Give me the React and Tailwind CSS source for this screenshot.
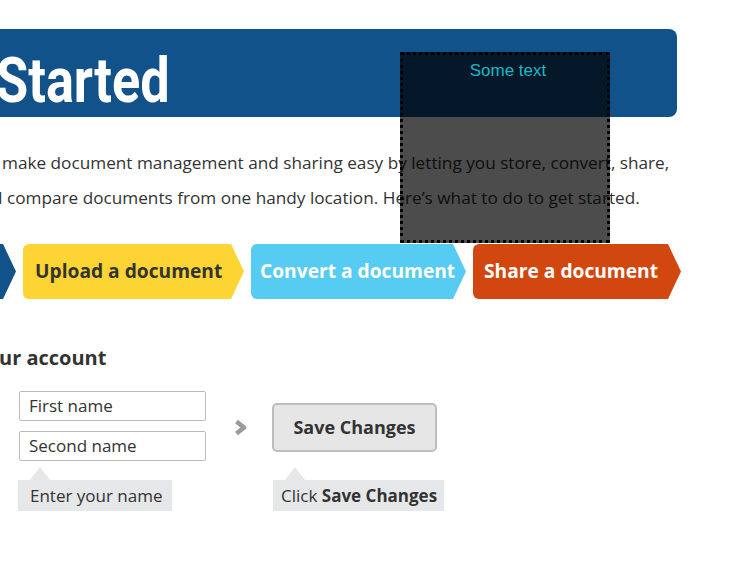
import React from "react";

const body = { fontFamily: '"Open Sans", "Noto Sans", sans-serif' };

function Step({ color, text, w, textColor, pl }) {
  return (
    <div
      className={`h-[55px] shrink-0 rounded-[6px] flex items-center font-bold text-[19.2px] whitespace-nowrap [clip-path:polygon(0_0,calc(100%-13px)_0,100%_50%,calc(100%-13px)_100%,0_100%)] ${color} ${textColor}`}
      style={{ width: w, paddingLeft: pl }}
    >
      {text}
    </div>
  );
}

function Tip({ children, w, pl }) {
  return (
    <div className="flex flex-col">
      <div className="ml-[12px] w-0 h-0 border-l-[10px] border-r-[10px] border-b-[13px] border-l-transparent border-r-transparent border-b-[#e6e7e8]" />
      <div
        className="h-[31px] bg-[#e6e7e8] flex items-center text-[17px] text-[#333] whitespace-nowrap"
        style={{ width: w, paddingLeft: pl }}
      >
        {children}
      </div>
    </div>
  );
}

export default function App() {
  return (
    <div className="relative w-[750px] h-[564px] overflow-hidden bg-white text-[#333]" style={body}>
      <div className="mt-[29px] w-[677px] h-[88px] bg-[#12528a] rounded-r-[8px] flex items-center">
        <span
          className="-ml-[4px] text-white font-bold text-[63px] leading-none pt-[14px] origin-left scale-x-[0.83] inline-block"
          style={{ fontFamily: 'Roboto, "Liberation Sans", sans-serif' }}
        >
          Started
        </span>
      </div>

      <div className="mt-[28px] text-[17.2px] leading-[35px] whitespace-nowrap">
        <div className="ml-[2px]">make document management and sharing easy by letting you store, convert, share,</div>
        <div className="-ml-[8px]">d compare documents from one handy location. Here’s what to do to get started.</div>
      </div>

      <div className="mt-[29px] flex gap-[7px] -ml-[24px]">
        <Step color="bg-[#12528a]" text="" w={40} textColor="text-white" pl={0} />
        <Step color="bg-[#fcd434]" text="Upload a document" w={221} textColor="text-[#333]" pl={12} />
        <Step color="bg-[#56ccf3]" text="Convert a document" w={215} textColor="text-white" pl={9} />
        <Step color="bg-[#d2470f]" text="Share a document" w={208} textColor="text-white" pl={11} />
      </div>

      <div className="mt-[47px] font-bold text-[20px] leading-[24px] -ml-[1px]">ur account</div>

      <div className="mt-[21px] ml-[18px] grid grid-cols-[189px_66px_auto] items-center">
        <div className="flex flex-col gap-[10px] pl-[1px]">
          <div className="h-[30px] w-[187px] border border-[#bbb] rounded-[2px] flex items-center pl-[9px] text-[17px]">First name</div>
          <div className="h-[30px] w-[187px] border border-[#bbb] rounded-[2px] flex items-center pl-[9px] text-[17px]">Second name</div>
        </div>
        <div className="pl-[27px] pt-[3px]">
          <svg width="13" height="17" viewBox="0 0 13 17">
            <path d="M2.5 2.5 L10 8.5 L2.5 14.5" fill="none" stroke="#9a9a9a" strokeWidth="4.5" strokeLinejoin="round" />
          </svg>
        </div>
        <div className="pt-[2px] -ml-[1px]">
          <div className="w-[165px] h-[49px] bg-[#e6e6e6] border-2 border-[#bdbdbd] rounded-[5px] flex items-center justify-center font-bold text-[18px]">
            Save Changes
          </div>
        </div>
        <div className="mt-[6px]">
          <Tip w={154} pl={12}>Enter your name</Tip>
        </div>
        <div />
        <div className="mt-[6px]">
          <Tip w={171} pl={8}>
            Click&nbsp;<b>Save Changes</b>
          </Tip>
        </div>
      </div>

      <div className="absolute left-[400px] top-[52px] w-[210px] h-[191px] bg-black/70 border-[3px] border-dotted border-black">
        <div
          className="text-center text-[17px] leading-none mt-[7px] pl-[6px] text-[#1ab8c4]"
          style={{ fontFamily: '"Liberation Sans", Arial, sans-serif' }}
        >
          Some text
        </div>
      </div>
    </div>
  );
}
